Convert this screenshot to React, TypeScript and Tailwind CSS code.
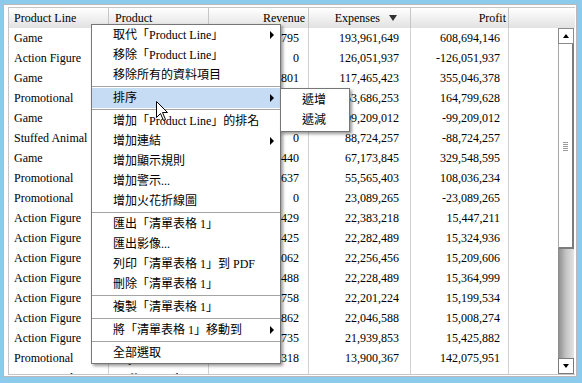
const rows = [
  ["Game", "Board Game", "802,655,795", "193,961,649", "608,694,146"],
  ["Action Figure", "Robot", "0", "126,051,937", "-126,051,937"],
  ["Game", "Card Game", "472,511,801", "117,465,423", "355,046,378"],
  ["Promotional", "Mug", "218,485,881", "53,686,253", "164,799,628"],
  ["Game", "Puzzle", "0", "99,209,012", "-99,209,012"],
  ["Stuffed Animal", "Bear", "0", "88,724,257", "-88,724,257"],
  ["Game", "Video Game", "396,722,440", "67,173,845", "329,548,595"],
  ["Promotional", "T-Shirt", "163,601,637", "55,565,403", "108,036,234"],
  ["Promotional", "Pen", "0", "23,089,265", "-23,089,265"],
  ["Action Figure", "Hero", "37,830,429", "22,383,218", "15,447,211"],
  ["Action Figure", "Villain", "37,607,425", "22,282,489", "15,324,936"],
  ["Action Figure", "Soldier", "37,466,062", "22,256,456", "15,209,606"],
  ["Action Figure", "Knight", "37,593,488", "22,228,489", "15,364,999"],
  ["Action Figure", "Ninja", "37,400,758", "22,201,224", "15,199,534"],
  ["Action Figure", "Pirate", "37,054,862", "22,046,588", "15,008,274"],
  ["Action Figure", "Wizard", "37,365,735", "21,939,853", "15,425,882"],
  ["Promotional", "Cap", "155,976,318", "13,900,367", "142,075,951"],
  ["Promotional", "Coffee Grinder", "109,717,507", "10,359,151", "99,358,356"],
];

type MenuEntry = { label?: string; arrow?: boolean; active?: boolean; sep?: boolean };

const menu: MenuEntry[] = [
  { label: "取代「Product Line」", arrow: true },
  { label: "移除「Product Line」" },
  { label: "移除所有的資料項目" },
  { sep: true },
  { label: "排序", arrow: true, active: true },
  { sep: true },
  { label: "增加「Product Line」的排名" },
  { label: "增加連結", arrow: true },
  { label: "增加顯示規則" },
  { label: "增加警示..." },
  { label: "增加火花折線圖" },
  { sep: true },
  { label: "匯出「清單表格 1」" },
  { label: "匯出影像..." },
  { label: "列印「清單表格 1」到 PDF" },
  { label: "刪除「清單表格 1」" },
  { sep: true },
  { label: "複製「清單表格 1」" },
  { sep: true },
  { label: "將「清單表格 1」移動到", arrow: true },
  { sep: true },
  { label: "全部選取" },
];

const Arrow = () => (
  <span className="w-0 h-0 border-l-[4px] border-l-black border-y-[4px] border-y-transparent" />
);

export default function App() {
  return (
    <div className="relative w-[582px] h-[383px] overflow-hidden bg-[#8dcbec] pt-[4px] pl-[3px] pr-[5px] pb-[6px] font-['Liberation_Serif','Noto_Sans_CJK_TC',serif] text-[12px] text-black">
      <div className="h-full bg-white border border-[#b9b9b9] pl-[4px] pt-[2px] pr-[1px] pb-[1px]">
        <div className="h-full flex flex-col border-l border-t border-b border-[#c6c6c6]">
          {/* header */}
          <div className="h-[20px] flex bg-gradient-to-b from-white via-[#f0f0f0] to-[#e2e2e2] leading-[20px]">
            <div className="w-[100px] border-r border-[#c6c6c6] pl-[5px]">Product Line</div>
            <div className="w-[100px] border-r border-[#c6c6c6] pl-[6px]">Product</div>
            <div className="w-[100px] border-r border-[#c6c6c6] pr-[3px] text-right">Revenue</div>
            <div className="w-[102px] border-r border-[#c6c6c6] flex items-center justify-end pr-[13px]">
              <span>Expenses</span>
              <span className="ml-[9px] w-0 h-0 border-t-[6px] border-t-[#333] border-x-[4px] border-x-transparent" />
            </div>
            <div className="w-[98px] border-r border-[#c6c6c6] pr-[2px] text-right">Profit</div>
            <div className="flex-1" />
          </div>

          {/* body */}
          <div className="flex-1 flex overflow-hidden">
            <div className="flex-1 flex flex-col overflow-hidden">
              {rows.map((r, i) => (
                <div key={i} className="h-[20px] shrink-0 flex leading-[20px]">
                  <div className="w-[100px] border-r border-[#d2d2d2] pl-[5px] whitespace-nowrap overflow-hidden">{r[0]}</div>
                  <div className="w-[100px] border-r border-[#d2d2d2] pl-[6px] whitespace-nowrap overflow-hidden">{r[1]}</div>
                  <div className="w-[100px] border-r border-[#d2d2d2] pr-[9px] text-right">{r[2]}</div>
                  <div className="w-[102px] border-r border-[#d2d2d2] pr-[11px] text-right">{r[3]}</div>
                  <div className="w-[98px] border-r border-[#d2d2d2] pr-[8px] text-right">{r[4]}</div>
                  <div className="flex-1" />
                </div>
              ))}
            </div>

            {/* scrollbar */}
            <div className="w-[16px] mr-[1px] flex flex-col">
              <div className="h-[16px] border border-[#8a8a8a] bg-white flex items-center justify-center">
                <span className="w-0 h-0 border-b-[4px] border-b-black border-x-[3px] border-x-transparent" />
              </div>
              <div className="h-[205px] bg-white border-l border-[#a8a8a8] border-r-2 border-r-[#7c7c7c] border-b-2 border-b-[#7c7c7c] flex flex-col items-center pt-[98px] gap-[1px]">
                <span className="w-[5px] h-px bg-[#9a9a9a]" />
                <span className="w-[5px] h-px bg-[#9a9a9a]" />
                <span className="w-[5px] h-px bg-[#9a9a9a]" />
                <span className="w-[5px] h-px bg-[#9a9a9a]" />
                <span className="w-[5px] h-px bg-[#9a9a9a]" />
              </div>
              <div className="flex-1 bg-gradient-to-r from-[#8a8a8a] via-[#c4c4c4] to-[#e4e4e4]" />
              <div className="h-[16px] border border-[#7a7a7a] bg-white flex items-center justify-center">
                <span className="w-0 h-0 border-t-[4px] border-t-black border-x-[3px] border-x-transparent" />
              </div>
            </div>
          </div>
        </div>
      </div>

      {/* context menu */}
      <div className="absolute left-[91px] top-[24px] w-[190px] bg-white border border-[#767676] shadow-[2px_2px_3px_rgba(0,0,0,0.4)] font-['Liberation_Serif','Noto_Sans_CJK_TC',serif]">
        {menu.map((m, i) =>
          m.sep ? (
            <div key={i} className="h-[3px] flex items-center">
              <div className="h-px w-full bg-[#a4a4a4]" />
            </div>
          ) : (
            <div
              key={i}
              className={`h-[20px] flex items-center justify-between pl-[21px] pr-[6px] whitespace-nowrap ${m.active ? "bg-[#c6dcf4]" : ""}`}
            >
              <span>{m.label}</span>
              {m.arrow && <Arrow />}
            </div>
          )
        )}
      </div>

      {/* submenu */}
      <div className="absolute left-[280px] top-[88px] w-[70px] bg-white border border-[#767676] py-[1px] shadow-[2px_2px_3px_rgba(0,0,0,0.4)]">
        <div className="h-[20px] flex items-center pl-[21px]">遞增</div>
        <div className="h-[20px] flex items-center pl-[21px]">遞減</div>
      </div>

      {/* mouse cursor */}
      <svg className="absolute left-[156px] top-[101px]" width="13" height="21" viewBox="0 0 13 21">
        <path d="M0.5 0.5 L0.5 16.5 L4.5 12.5 L7.5 19.5 L9.5 18.5 L6.5 11.5 L11.5 11.5 Z" fill="white" stroke="black" strokeWidth="1" />
      </svg>
    </div>
  );
}
